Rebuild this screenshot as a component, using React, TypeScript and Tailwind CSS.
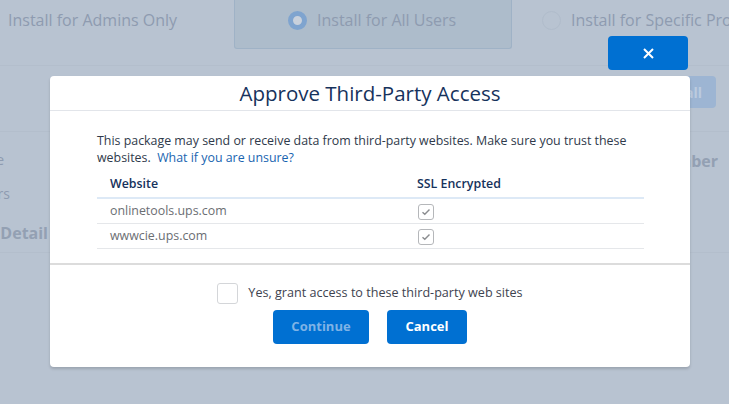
import React from "react";

const font = { fontFamily: '"Open Sans", "Noto Sans", sans-serif' };

function Check() {
  return (
    <div className="w-[16px] h-[16px] rounded-[3px] border border-[#b5b7ba] bg-white flex items-center justify-center">
      <svg width="10" height="8" viewBox="0 0 10 8">
        <path d="M1.5 4.2 L3.8 6.3 L8.5 1.5" fill="none" stroke="#8a8c8f" strokeWidth="1.4" />
      </svg>
    </div>
  );
}

export default function App() {
  return (
    <div className="relative w-[729px] h-[404px] overflow-hidden bg-[#b8c3d1]" style={font}>
      {/* dimmed page behind */}
      <div className="flex flex-col">
        <div className="flex items-start h-[66px] border-b border-[#b3becc] overflow-hidden">
          <div className="shrink-0 w-[234px] pl-[8px] pt-[8px] text-[16px] text-[#8e9bb0] whitespace-nowrap">Install for Admins Only</div>
          <div className="shrink-0 w-[278px] h-[49px] rounded-b-[3px] border border-t-0 border-[#9fb2c6] bg-[#adbccb] flex items-start pt-[8px] pl-[53px] gap-[10px]">
            <div className="w-[19px] h-[19px] rounded-full border-[5px] border-[#7fa4cf] bg-[#c9d1dc] mt-[3px]" />
            <span className="text-[16px] text-[#8e9bb0] whitespace-nowrap">Install for All Users</span>
          </div>
          <div className="shrink-0 ml-[30px] flex items-start pt-[8px] gap-[10px]">
            <div className="w-[19px] h-[19px] rounded-full border border-[#b0bccb] mt-[3px]" />
            <span className="text-[16px] text-[#8e9bb0] whitespace-nowrap">Install for Specific Profiles</span>
          </div>
        </div>
        <div className="flex justify-end h-[66px] pt-[10px] pr-[13px] border-b border-[#b3becc]">
          <div className="w-[76px] h-[32px] rounded-[4px] bg-[#9db5d3] flex items-center justify-end pr-[14px] text-[14px] font-bold text-[#bccbdf]">
            Install
          </div>
        </div>
        <div className="flex justify-between h-[120px] pt-[17px]">
          <div className="w-[48px] flex flex-col items-end text-[14px] text-[#8e9bb0] whitespace-nowrap">
            <span className="h-[34px] mr-[44px]">Name</span>
            <span className="h-[38px] mr-[38px]">Publishers</span>
            <span className="text-[16px] font-bold text-[#93a0b3]">Package Detail</span>
          </div>
          <span className="text-[16px] font-bold text-[#93a0b3] mr-[11px] whitespace-nowrap">Version Number</span>
        </div>
        <div className="border-t border-[#b3becc]" />
      </div>

      {/* close button */}
      <button className="absolute left-[608px] top-[36px] w-[80px] h-[34px] rounded-[4px] bg-[#0070d2] flex items-center justify-center">
        <svg width="11" height="11" viewBox="0 0 11 11">
          <path d="M1 1 L10 10 M10 1 L1 10" stroke="white" strokeWidth="2" />
        </svg>
      </button>

      {/* modal */}
      <div className="absolute left-[50px] top-[76px] w-[640px] h-[291px] bg-white rounded-[4px] shadow-[0_2px_3px_rgba(0,0,0,0.16)] flex flex-col">
        <div className="h-[35px] border-b border-[#e2e5ea] flex items-center justify-center">
          <h2 className="text-[20.5px] text-[#16325c] font-medium">Approve Third-Party Access</h2>
        </div>
        <div className="pt-[21px] pl-[47px] pr-[46px] pb-[14px] border-b-2 border-[#dcdcdc]">
          <p className="text-[12.4px] leading-[17px] text-[#2f3a4b]">
            This package may send or receive data from third-party websites. Make sure you trust these websites.{" "}
            <span className="text-[#1964b0]">&nbsp;What if you are unsure?</span>
          </p>
          <div className="mt-[6px] text-[12.4px]">
            <div className="flex items-center h-[27px] border-b-2 border-[#dde9f6] font-semibold text-[#16325c]">
              <span className="w-[307px] pl-[13px]">Website</span>
              <span className="pl-[13px]">SSL Encrypted</span>
            </div>
            <div className="flex items-center h-[25px] pt-[1px] border-b border-[#e5e7ea] text-[#6b6e73]">
              <span className="w-[307px] pl-[13px]">onlinetools.ups.com</span>
              <span className="pl-[14px]"><Check /></span>
            </div>
            <div className="flex items-center h-[25px] pt-[1px] border-b border-[#e5e7ea] text-[#6b6e73]">
              <span className="w-[307px] pl-[13px]">wwwcie.ups.com</span>
              <span className="pl-[14px]"><Check /></span>
            </div>
          </div>
        </div>
        <div className="flex flex-col items-center pt-[18px]">
          <div className="flex items-center gap-[10px]">
            <div className="w-[21px] h-[21px] rounded-[3px] border border-[#d4d6d9] bg-white" />
            <span className="text-[12.6px] text-[#3e4350]">Yes, grant access to these third-party web sites</span>
          </div>
          <div className="flex gap-[18px] mt-[6px]">
            <button className="w-[96px] h-[34px] rounded-[4px] bg-[#0070d2] text-[13px] font-bold text-[#7fb3e6]">Continue</button>
            <button className="w-[80px] h-[34px] rounded-[4px] bg-[#0070d2] text-[13px] font-bold text-white">Cancel</button>
          </div>
        </div>
      </div>
    </div>
  );
}
